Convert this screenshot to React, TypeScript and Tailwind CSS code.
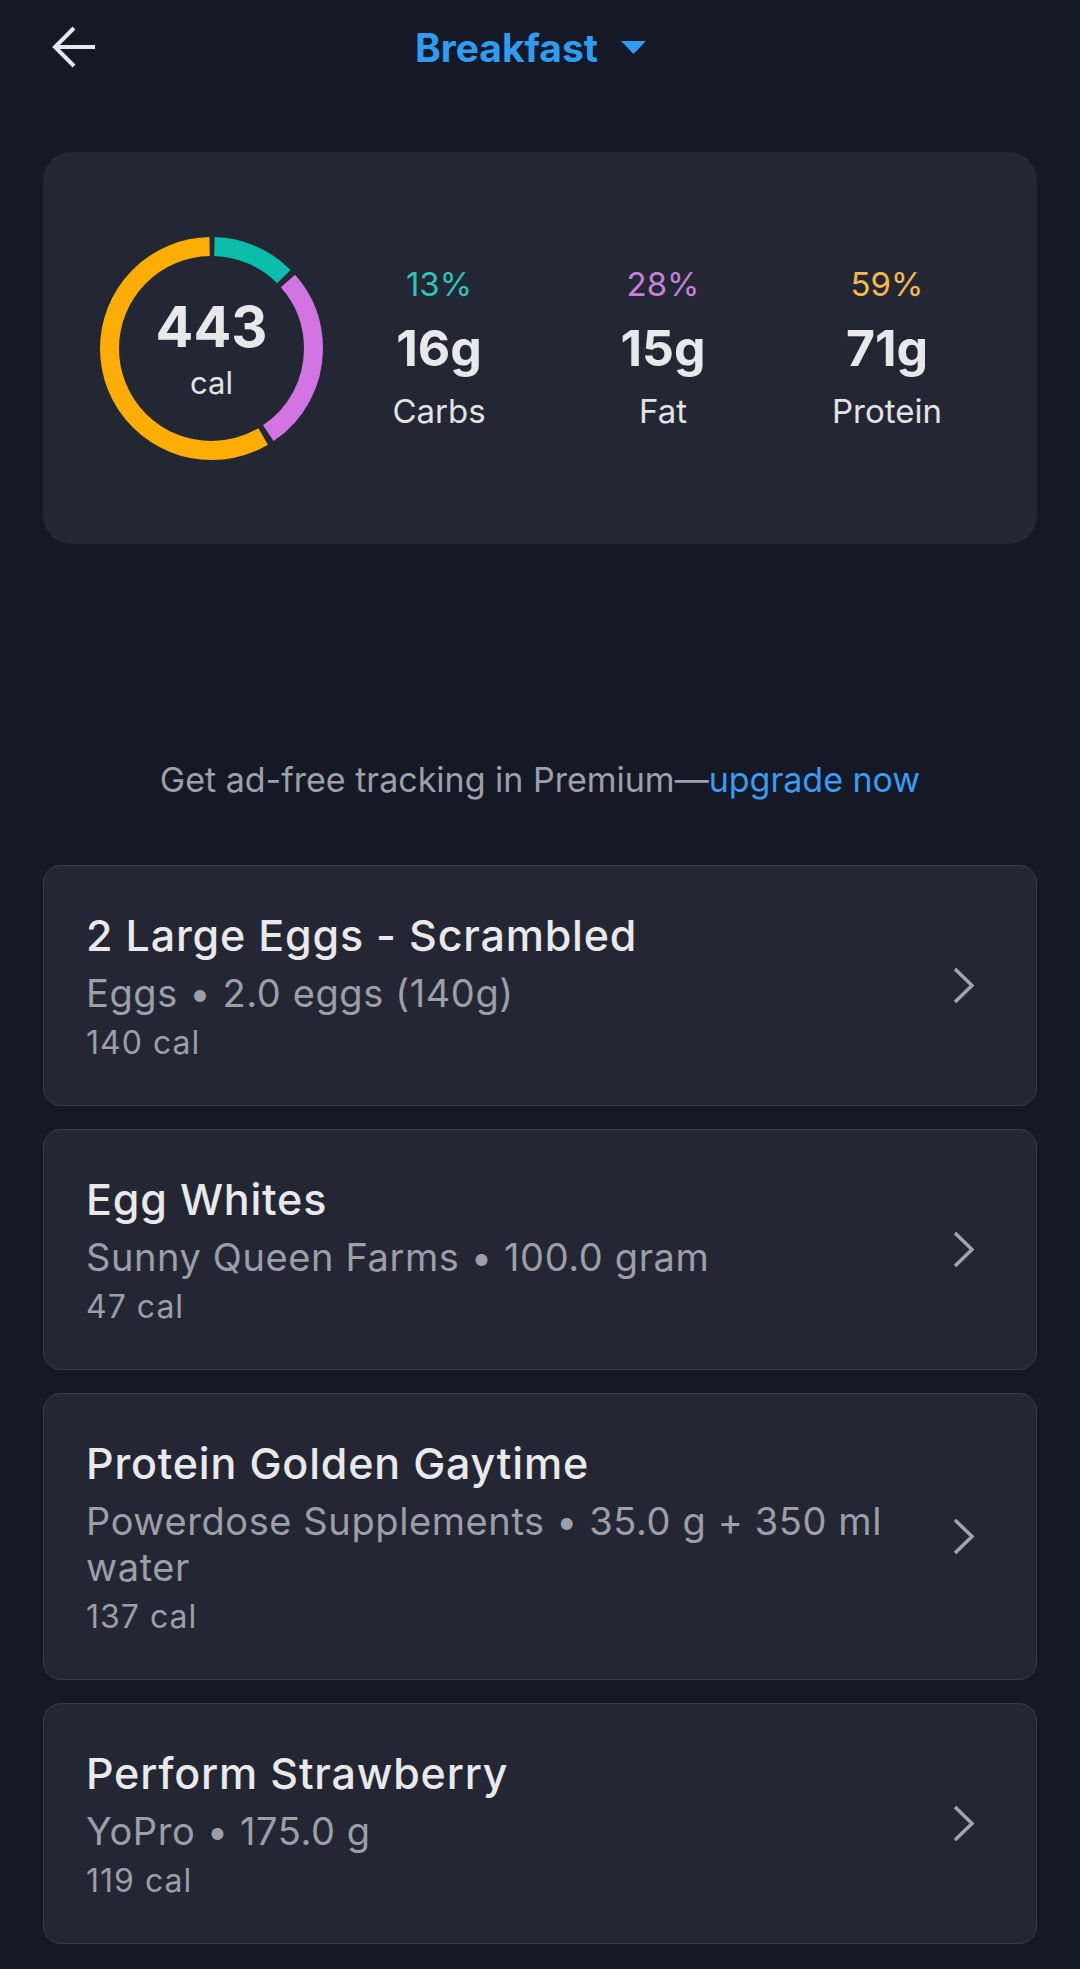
const macros = [
  { pct: "13%", grams: "16g", label: "Carbs", color: "text-[#2cc4b4]" },
  { pct: "28%", grams: "15g", label: "Fat", color: "text-[#c77fd8]" },
  { pct: "59%", grams: "71g", label: "Protein", color: "text-[#f4b84e]" },
];

const foods = [
  { name: "2 Large Eggs - Scrambled", detail: "Eggs • 2.0 eggs (140g)", cal: "140 cal" },
  { name: "Egg Whites", detail: "Sunny Queen Farms • 100.0 gram", cal: "47 cal" },
  { name: "Protein Golden Gaytime", detail: "Powerdose Supplements • 35.0 g + 350 ml water", cal: "137 cal" },
  { name: "Perform Strawberry", detail: "YoPro • 175.0 g", cal: "119 cal" },
];

// ring segments, fractions of the full circle
const R = 102;
const C = 2 * Math.PI * R;
const GAP = 6;
const segments = [
  { start: 0, frac: 0.13, color: "#0bbdab" },
  { start: 0.13, frac: 0.28, color: "#d275e2" },
  { start: 0.41, frac: 0.59, color: "#fead05" },
];

function Ring() {
  return (
    <div className="relative w-[223px] h-[223px] shrink-0">
      <svg width="223" height="223" viewBox="0 0 223 223">
        {segments.map((s) => (
          <circle
            key={s.color}
            cx="111.5"
            cy="111.5"
            r={R}
            fill="none"
            stroke={s.color}
            strokeWidth="19"
            strokeDasharray={`${s.frac * C - GAP} ${C}`}
            strokeDashoffset={-(s.start * C + GAP / 2)}
            transform="rotate(-90 111.5 111.5)"
          />
        ))}
      </svg>
      <div className="absolute inset-0 flex flex-col items-center justify-center">
        <div className="text-[56px] leading-[56px] font-bold text-[#e8e8ea]">443</div>
        <div className="text-[31px] leading-[31px] mt-[12px] text-[#e2e2e5]">cal</div>
      </div>
    </div>
  );
}

export default function App() {
  return (
    <div className="min-h-screen w-full bg-[#141925] font-['Inter',sans-serif] pb-[24px]">
      {/* header */}
      <div className="h-[94px] flex items-center">
        <svg className="ml-[52px]" width="44" height="44" viewBox="0 0 44 44" fill="none" stroke="#e8e8ea" strokeWidth="4">
          <path d="M43 22H4M22 3L3 22L22 41" />
        </svg>
        <div className="ml-[319px] flex items-center">
          <span className="text-[39px] leading-none font-bold text-[#2f9cf4]">Breakfast</span>
          <svg className="ml-[23px]" width="25" height="13" viewBox="0 0 25 13">
            <path d="M0 0H25L12.5 13Z" fill="#2f9cf4" />
          </svg>
        </div>
      </div>

      {/* summary */}
      <div className="mx-[43px] mt-[58px] h-[392px] rounded-[28px] bg-[#232733] flex items-center pl-[57px] pr-[38px]">
        <Ring />
        <div className="ml-[4px] flex-1 grid grid-cols-3">
          {macros.map((m) => (
            <div key={m.label} className="flex flex-col items-center">
              <div className={`text-[33px] leading-[33px] ${m.color}`}>{m.pct}</div>
              <div className="text-[50px] leading-[50px] font-bold text-[#e8e8ea] mt-[22px]">{m.grams}</div>
              <div className="text-[33px] leading-[33px] text-[#e2e2e5] mt-[22px]">{m.label}</div>
            </div>
          ))}
        </div>
      </div>

      {/* upsell */}
      <p className="mt-[219px] text-center text-[34px] leading-[34px] text-[#9da0a8]">
        Get ad-free tracking in Premium—<span className="text-[#3a9cf2]">upgrade now</span>
      </p>

      {/* food list */}
      <div className="mt-[68px] mx-[43px] flex flex-col gap-[23px]">
        {foods.map((f) => (
          <div
            key={f.name}
            className="rounded-[18px] border-[1.5px] border-[#393d49] bg-[#242733] flex items-center pl-[42px] pr-[61px] pt-[35px] pb-[35px]"
          >
            <div className="flex-1 min-w-0 mr-[24px]">
              <div className="text-[43px] leading-[69px] font-medium tracking-[0.8px] text-[#e9e9eb]">{f.name}</div>
              <div className="text-[38px] leading-[46px] tracking-[0.6px] text-[#9c9fa7]">{f.detail}</div>
              <div className="text-[32px] leading-[54px] tracking-[1px] text-[#9c9fa7]">{f.cal}</div>
            </div>
            <svg width="22" height="37" viewBox="0 0 22 37" fill="none" stroke="#a2a5ad" strokeWidth="3.5">
              <path d="M2 2L19 18.5L2 35" />
            </svg>
          </div>
        ))}
      </div>
    </div>
  );
}
